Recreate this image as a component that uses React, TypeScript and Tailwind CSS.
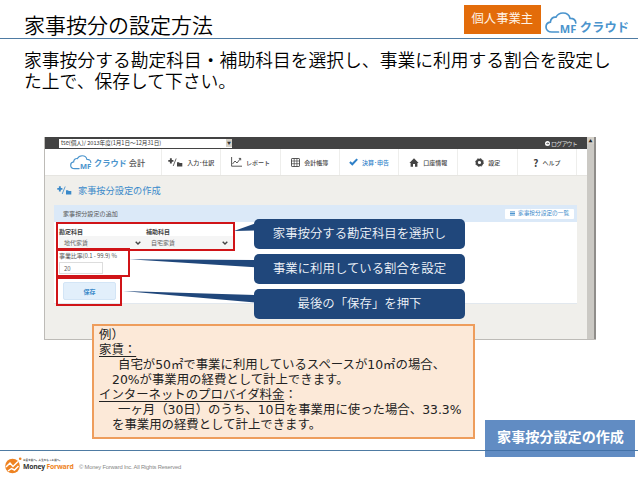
import type { ReactNode } from 'react';
import { clsx } from 'clsx';

interface NavItem {
  label: string;
  icon: ReactNode;
  active?: boolean;
}

const PlusFolderIcon = ({ className }: { className?: string }) => (
  <svg viewBox="0 0 15 9" className={className} fill="currentColor">
    <path d="M1.9.3h1.9v1.6h1.6v1.9H3.8v1.6H1.9V3.8H.3V1.9h1.6z" />
    <path d="M5.2 8 8.2.5" stroke="currentColor" strokeWidth=".8" fill="none" />
    <path d="M9 4.2h2l.7.7h2.6v3.5H9z" />
  </svg>
);

const navItems: NavItem[] = [
  { label: '入力･仕訳', icon: <PlusFolderIcon className="w-[15px] h-[9px]" /> },
  {
    label: 'レポート',
    icon: (
      <svg viewBox="0 0 11 10" className="w-[11px] h-[10px]" fill="none" stroke="currentColor">
        <path d="M.6 0v9.2H11" strokeWidth=".9" />
        <path d="M1.5 7 4 4l2 2 3.5-4.5M7.8 1.4h1.9v1.9" strokeWidth=".9" />
      </svg>
    ),
  },
  {
    label: '会計帳簿',
    icon: (
      <svg viewBox="0 0 9 9" className="w-[9px] h-[9px]" fill="none" stroke="currentColor" strokeWidth=".9">
        <rect x=".5" y=".5" width="8" height="8" rx=".6" />
        <path d="M.5 3h8M.5 5.7h8M3.2.5v8M5.9.5v8" strokeWidth=".7" />
      </svg>
    ),
  },
  {
    label: '決算･申告',
    active: true,
    icon: (
      <svg viewBox="0 0 9 8" className="w-[9px] h-[8px]" fill="none" stroke="currentColor" strokeWidth="2">
        <path d="m.9 4 2.4 2.3L8.2 1.1" />
      </svg>
    ),
  },
  {
    label: '口座情報',
    icon: (
      <svg viewBox="0 0 10 9" className="w-[10px] h-[9px]" fill="currentColor">
        <path d="M5 .3 9.6 5H8.4v3.7H6V6H4v2.7H1.6V5H.4z" />
      </svg>
    ),
  },
  {
    label: '設定',
    icon: (
      <svg viewBox="0 0 10 10" className="w-[9px] h-[9px]" fill="none" stroke="currentColor">
        <circle cx="5" cy="5" r="3" strokeWidth="2.4" />
        <circle cx="5" cy="5" r="4.4" strokeWidth="1" strokeDasharray="1.7 1.75" />
      </svg>
    ),
  },
  { label: 'ヘルプ', icon: <span className="text-[10px] font-bold">?</span> },
];

function CloudLogo({ className }: { className?: string }) {
  return (
    <svg viewBox="0 0 34 22" className={clsx('overflow-visible', className)} fill="none">
      <path
        d="M13.5 20H6.8C3.3 20 1 17.8 1 15c0-2.7 1.9-4.6 4.4-4.9C5.5 6.7 8 4.8 11 5.2 12.3 2.5 15 1 18 1c3.7 0 6.3 2.2 7 5.3 3.5-.2 5.8 1.8 5.8 4.7"
        stroke="#4a94cd"
        strokeWidth="1.7"
        strokeLinecap="round"
      />
      <text
        x="14.8"
        y="20.5"
        fill="#4a94cd"
        fontSize="10"
        fontWeight="700"
        textLength="16.5"
        lengthAdjust="spacingAndGlyphs"
        fontFamily="Open Sans, sans-serif"
      >
        MF
      </text>
    </svg>
  );
}

function FieldSelect({ label, value, className }: { label: string; value: string; className?: string }) {
  return (
    <div className={className}>
      <p className="h-[9px] text-[6px] leading-[9px] font-bold text-[#444]">{label}</p>
      <div className="flex items-center justify-between h-[13px] pl-[5px] pr-[5px] bg-[#f5f5f5] text-[6px] text-[#666]">
        <span>{value}</span>
        <svg viewBox="0 0 6 4" className="w-[6px] h-[4px]" fill="none" stroke="#444" strokeWidth="1.4">
          <path d="m.7.7 2.3 2.3L5.3.7" />
        </svg>
      </div>
    </div>
  );
}

function AppWindow() {
  return (
    <div className="flex w-[552px] h-[203px] bg-[#f0efeb] border-l border-b border-[#bdbbb7]">
      <div className="flex-1 min-w-0">
        {/* Top bar */}
        <div className="flex items-center justify-between h-[12px] pl-[14px] pr-[10px] bg-[#434343]">
          <div className="flex items-center justify-between w-[173px] h-[9px] pl-[2px] bg-white text-[5.6px] text-[#333]">
            <span className="whitespace-nowrap">tse(個人)/ 2013年度(1月1日～12月31日)</span>
            <span className="flex items-center justify-center w-[6px] h-[8px] bg-[#d4d0c8] text-[4px]">▼</span>
          </div>
          <div className="flex items-center gap-[1px] text-[6px] text-[#ddd]">
            <svg viewBox="0 0 6 6" className="w-[5px] h-[5px]">
              <circle cx="3" cy="3" r="3" fill="#fff" />
              <path d="M1.5 3h3M3.2 1.7 4.5 3 3.2 4.3" stroke="#434343" strokeWidth=".8" fill="none" />
            </svg>
            <span className="tracking-[-0.8px]">ログアウト</span>
          </div>
        </div>

        {/* Global navigation */}
        <nav className="flex h-[27px] bg-white border-b border-[#e6e5e1]">
          <div className="flex items-center w-[117px] pl-[25px] border-r border-[#eeeeec]">
            <CloudLogo className="w-[23px] h-[15px]" />
            <span className="ml-[1px] text-[8.2px] font-bold text-[#4a94cd]">クラウド</span>
            <span className="ml-[2px] text-[8.2px] font-medium text-[#555]">会計</span>
          </div>
          {navItems.map((item) => (
            <div
              key={item.label}
              className={clsx(
                'flex items-center justify-center gap-[4px] w-[59.3px] border-r border-[#eeeeec] text-[6px] whitespace-nowrap',
                item.active ? 'text-[#2e80c8]' : 'text-[#444]',
              )}
            >
              {item.icon}
              <span className="font-medium">{item.label}</span>
            </div>
          ))}
        </nav>

        {/* Page title */}
        <div className="flex items-center gap-[6px] h-[29px] pl-[12px] text-[#3b8aca]">
          <PlusFolderIcon className="w-[15px] h-[9px]" />
          <h2 className="text-[9.2px]">家事按分設定の作成</h2>
        </div>

        {/* Form panel */}
        <div className="w-[523px] h-[99px] ml-[9px] bg-white border-b border-[#e2e8ee]">
          <div className="flex items-center justify-between h-[17px] pl-[9px] pr-[3px] bg-[#dbe9f8]">
            <span className="text-[6.1px] text-[#555]">家事按分設定の追加</span>
            <span className="flex items-center gap-[3px] w-[69px] h-[10px] pl-[5px] bg-white rounded-[1px] text-[5.7px] text-[#3b8aca] whitespace-nowrap">
              <svg viewBox="0 0 6 5" className="w-[5px] h-[5px]" stroke="#3b8aca" strokeWidth="1.1">
                <path d="M0 .6h6M0 2.5h6M0 4.4h6" />
              </svg>
              家事按分設定の一覧
            </span>
          </div>
          <div className="flex pt-[5px] pl-[5px]">
            <FieldSelect label="勘定科目" value="地代家賃" className="w-[87px]" />
            <FieldSelect label="補助科目" value="自宅家賃" className="w-[87px]" />
          </div>
          <p className="pl-[5px] h-[11px] mt-[3px] text-[6px] leading-[8px] tracking-[-0.1px] text-[#555]">事業比率(0.1 - 99.9) %</p>
          <div className="ml-[5px] -mt-[1px] w-[44px] h-[12px] pl-[4px] border border-[#ddd] text-[6px] leading-[11px] text-[#666]">20</div>
          <div className="flex items-center justify-center w-[53px] h-[18px] ml-[9px] mt-[8px] rounded-[2px] border border-[#d3e5f6] bg-[#e2effb] text-[6px] font-bold text-[#3b8aca]">
            保存
          </div>
        </div>
      </div>

      {/* Scrollbar */}
      <div className="w-[9px] bg-[#cbc9c4] border-r-2 border-[#8f8d8a]">
        <div className="flex items-center justify-center h-[7px] bg-[#d4d0c8] text-[4px] text-[#222]">▲</div>
      </div>
    </div>
  );
}

const callouts = [
  { text: '家事按分する勘定科目を選択し', top: 'top-[219px]' },
  { text: '事業に利用している割合を設定', top: 'top-[254px]' },
  { text: '最後の「保存」を押下', top: 'top-[289px]' },
];

function Annotations() {
  return (
    <>
      <div className="absolute left-[57px] top-[223px] w-[177px] h-[27px] border border-[#d01418] outline-[0.5px] outline-[#d01418]" />
      <div className="absolute left-[57px] top-[249px] w-[72px] h-[27px] border border-[#d01418] outline-[0.5px] outline-[#d01418]" />
      <div className="absolute left-[57px] top-[278px] w-[64px] h-[27px] border border-[#d01418] outline-[0.5px] outline-[#d01418]" />

      {/* Callout tails */}
      <svg viewBox="0 0 135 85" className="absolute left-[122px] top-[220px] w-[135px] h-[85px]" fill="#20477b">
        <path d="M112 11 133 3.5v7z" />
        <path d="M7 39.3 133 40v7.2z" />
        <path d="M1 71 133 75v7.5z" />
      </svg>
      {callouts.map((callout) => (
        <div
          key={callout.text}
          className={clsx(
            'absolute left-[254px] w-[211px] h-[30px] flex items-center justify-center rounded-[5px] bg-[#20477b] pb-[2px] text-[12.4px] font-[350] text-[#f1f5fa] whitespace-nowrap',
            callout.top,
          )}
        >
          {callout.text}
        </div>
      ))}

      {/* Worked example */}
      <div className="absolute left-[92px] top-[324px] w-[383px] h-[115px] border-2 border-[#ee9d5c] bg-[#fce9d8] pl-[5px] pt-[1px] font-['DejaVu_Sans','Noto_Sans_CJK_JP',sans-serif] text-[12.4px] leading-[15px] text-[#222] whitespace-nowrap">
        <p>例）</p>
        <p><span className="underline underline-offset-2">家賃：</span></p>
        <p className="pl-[19px]">自宅が50㎡で事業に利用しているスペースが10㎡の場合、</p>
        <p className="pl-[13px]">20%が事業用の経費として計上できます。</p>
        <p><span className="underline underline-offset-2">インターネットのプロバイダ料金</span>：</p>
        <p className="pl-[19px]">一ヶ月（30日）のうち、10日を事業用に使った場合、33.3%</p>
        <p className="pl-[13px]">を事業用の経費として計上できます。</p>
      </div>

      <div className="absolute left-[485px] top-[420px] w-[150px] h-[37px] flex items-center justify-center bg-[#618cc3] pb-[4px] pl-[1px] text-[14.1px] font-bold text-white">
        家事按分設定の作成
        <span className="absolute left-0 top-[30px] w-full h-px bg-[#4472a8]" />
      </div>
    </>
  );
}

export default function App() {
  return (
    <div className="relative flex flex-col w-[638px] h-[479px] overflow-hidden bg-white font-['Noto_Sans_CJK_JP',sans-serif] text-[#1a1a1a]">
      {/* Slide header */}
      <header className="flex items-start justify-between h-[39px] pl-[24px] pr-[9px] border-b border-[#4e7ba3]">
        <h1 className="pt-[11px] font-['DejaVu_Sans','Noto_Sans_CJK_JP',sans-serif] text-[21px] leading-[30px] font-[350] text-black">
          家事按分の設定方法
        </h1>
        <div className="flex">
          <div className="flex items-center justify-center w-[77px] h-[29px] mt-[5px] pb-[2px] bg-[#e36c0a] text-[12.3px] text-[#fff3e6]">
            個人事業主
          </div>
          <CloudLogo className="w-[34px] h-[22px] ml-[4px] mt-[12px]" />
          <span className="ml-[1px] mt-[17px] text-[12.3px] leading-[20px] font-bold text-[#4a94cd]">クラウド</span>
        </div>
      </header>

      <p className="pl-[24px] pt-[11px] font-['DejaVu_Sans','Noto_Sans_CJK_JP',sans-serif] text-[17.8px] leading-[21px] font-[350] text-black whitespace-nowrap">
        家事按分する勘定科目・補助科目を選択し、事業に利用する割合を設定し
        <br />
        た上で、保存して下さい。
      </p>

      <div className="ml-[44px] mt-[45px]">
        <AppWindow />
      </div>

      {/* Footer */}
      <footer className="flex mt-auto h-[29px] pl-[5px] border-t border-[#4e7ba3]">
        <svg viewBox="0 0 17 17" className="w-[17px] h-[17px] mt-[6px]">
          <circle cx="7.5" cy="9" r="7.3" fill="#ee8322" />
          <path d="m1 10 4-4 3 3.5 5-5M3 14l3.5-2.5 3 1.5 4-4" stroke="#fff" strokeWidth="1.5" fill="none" />
          <circle cx="15.2" cy="1.8" r="1.3" fill="#ee8322" />
        </svg>
        <div className="flex flex-col w-[57px] pl-[1px] pt-[7px] whitespace-nowrap">
          <span className="text-[2.6px] leading-[4px] font-bold text-[#444]">お金を前へ。人生をもっと前へ。</span>
          <span className="font-['Open_Sans',sans-serif] text-[6.8px] leading-[9px] font-bold tracking-[-0.2px]">
            <span className="text-[#333]">Money</span> <span className="text-[#ee8322]">Forward</span>
          </span>
        </div>
        <span className="pt-[12px] font-['Liberation_Sans',sans-serif] text-[5.8px] leading-[9px] tracking-[-0.18px] text-[#888] whitespace-nowrap">
          © Money Forward Inc. All Rights Reserved
        </span>
      </footer>

      <Annotations />
    </div>
  );
}
